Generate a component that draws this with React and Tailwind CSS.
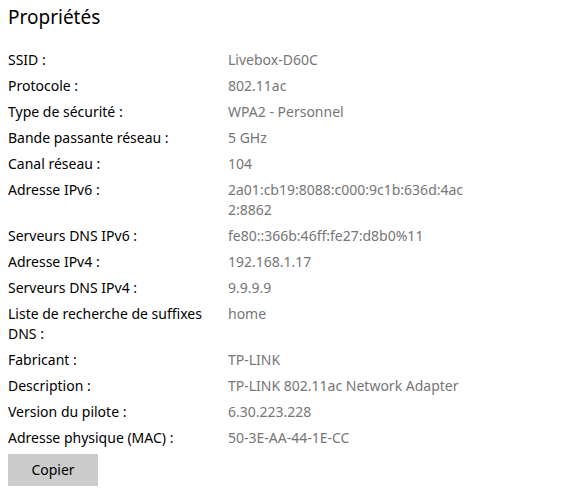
import React from 'react';

const rows = [
  { label: 'SSID :', value: ['Livebox-D60C'] },
  { label: 'Protocole :', value: ['802.11ac'] },
  { label: 'Type de sécurité :', value: ['WPA2 - Personnel'] },
  { label: 'Bande passante réseau :', value: ['5 GHz'] },
  { label: 'Canal réseau :', value: ['104'] },
  { label: 'Adresse IPv6 :', value: ['2a01:cb19:8088:c000:9c1b:636d:4ac', '2:8862'] },
  { label: 'Serveurs DNS IPv6 :', value: ['fe80::366b:46ff:fe27:d8b0%11'] },
  { label: 'Adresse IPv4 :', value: ['192.168.1.17'] },
  { label: 'Serveurs DNS IPv4 :', value: ['9.9.9.9'] },
  { label: ['Liste de recherche de suffixes', 'DNS :'], value: ['home'] },
  { label: 'Fabricant :', value: ['TP-LINK'] },
  { label: 'Description :', value: ['TP-LINK 802.11ac Network Adapter'] },
  { label: 'Version du pilote :', value: ['6.30.223.228'] },
  { label: 'Adresse physique (MAC) :', value: ['50-3E-AA-44-1E-CC'] },
];

const Lines = ({ text }) => {
  const lines = Array.isArray(text) ? text : [text];
  return lines.map((l, i) => <div key={i}>{l}</div>);
};

export default function App() {
  return (
    <div className="w-[573px] h-[494px] bg-white px-2 font-['Noto_Sans',sans-serif] overflow-hidden">
      <h1 className="pt-[3px] text-[19px] leading-[28px] text-black">Propriétés</h1>
      <div className="mt-[19px] flex flex-col gap-[6px] text-[14px] leading-[20px]">
        {rows.map((r, i) => (
          <div key={i} className="flex">
            <div className="w-[220px] text-black">
              <Lines text={r.label} />
            </div>
            <div className="text-[#767676]">
              <Lines text={r.value} />
            </div>
          </div>
        ))}
      </div>
      <button className="block mt-[6px] w-[90px] h-[32px] bg-[#cccccc] text-[14px] leading-[20px] text-black">
        Copier
      </button>
    </div>
  );
}
